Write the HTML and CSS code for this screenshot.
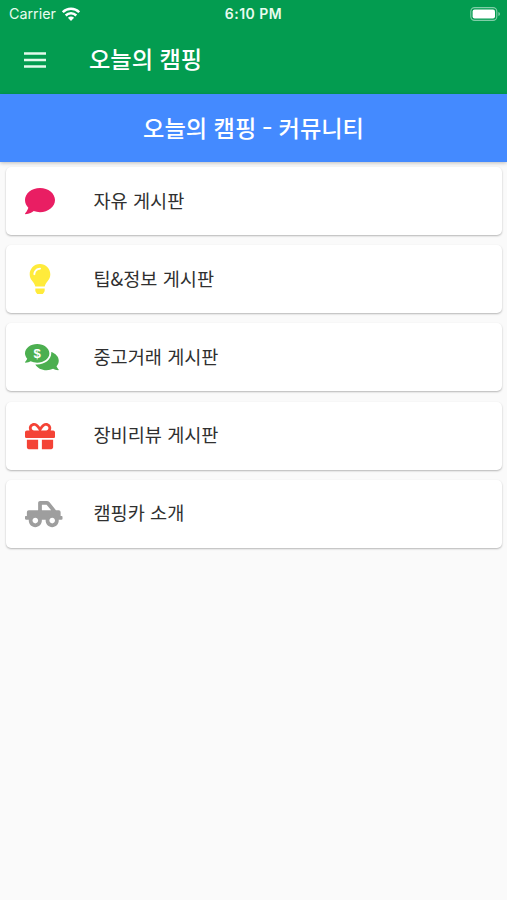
FILE: index.html
```html
<!DOCTYPE html>
<html lang="ko">
<head>
    <meta charset="UTF-8">
    <meta name="viewport" content="width=device-width, initial-scale=1.0">
    <title>오늘의 캠핑</title>
    <link rel="stylesheet" href="styles.css">
</head>
<body>
    <header class="app-bar">
        <div class="status-bar">
            <div class="carrier">
                <span>Carrier</span>
                <svg class="wifi" viewBox="0 0 18 14">
                    <path d="M.8 5.2a11.7 11.7 0 0 1 16.4 0M3.7 8.5a7.6 7.6 0 0 1 10.6 0" fill="none" stroke="currentColor" stroke-width="2.5"/>
                    <path d="M5.9 10.8a4.6 4.6 0 0 1 6.2 0L9 13.9z" fill="currentColor"/>
                </svg>
            </div>
            <div class="time">6:10 PM</div>
            <div class="battery">
                <svg viewBox="0 0 31 14">
                    <rect x=".8" y=".6" width="26" height="12.8" rx="3.8" fill="none" stroke="#fff" stroke-opacity=".5" stroke-width="1.1"/>
                    <rect x="2.6" y="2.4" width="22.4" height="9.2" rx="2" fill="#fff"/>
                    <path d="M28.4 5v4q1.6-.6 1.6-2t-1.6-2z" fill="#fff" fill-opacity=".5"/>
                </svg>
            </div>
        </div>
        <div class="toolbar">
            <svg class="menu" viewBox="0 0 24 16">
                <path d="M1 1.5h22M1 8h22M1 14.5h22" stroke="currentColor" stroke-width="2.4"/>
            </svg>
            <h1>오늘의 캠핑</h1>
        </div>
    </header>

    <h2 class="banner">오늘의 캠핑 <span class="dash">-</span> 커뮤니티</h2>

    <main class="board-list">
        <div class="card">
            <svg class="icon pink" viewBox="0 0 512 512">
                <path d="M256 32C114.6 32 0 125.1 0 240c0 49.6 21.4 95 57 130.7C44.5 421.1 2.7 466 2.2 466.5c-2.2 2.3-2.8 5.7-1.5 8.7S4.8 480 8 480c66.3 0 116-31.8 140.6-51.4 32.7 12.3 69 19.4 107.4 19.4 141.4 0 256-93.1 256-208S397.4 32 256 32z"/>
            </svg>
            <span>자유 게시판</span>
        </div>
        <div class="card">
            <svg class="icon yellow" viewBox="-80 0 512 512">
                <path d="M96.06 454.35c.01 6.29 1.87 12.45 5.36 17.69l17.09 25.69a31.99 31.99 0 0 0 26.64 14.28h61.71a31.99 31.99 0 0 0 26.64-14.28l17.09-25.69a31.989 31.989 0 0 0 5.36-17.69l.04-38.35H96.01l.05 38.35zM0 176c0 44.37 16.45 84.85 43.56 115.78 16.52 18.85 42.36 58.23 52.21 91.45.04.26.07.52.11.78h160.24c.04-.26.07-.51.11-.78 9.85-33.22 35.69-72.6 52.21-91.45C335.55 260.85 352 220.37 352 176 352 78.61 272.91-.3 175.45 0 73.44.31 0 82.97 0 176zm176-80c-44.11 0-80 35.89-80 80 0 8.84-7.16 16-16 16s-16-7.16-16-16c0-61.76 50.24-112 112-112 8.84 0 16 7.16 16 16s-7.16 16-16 16z"/>
            </svg>
            <span>팁&amp;정보 게시판</span>
        </div>
        <div class="card">
            <svg class="icon green" viewBox="0 0 512 512">
                <path d="M416 192c0-88.4-93.1-160-208-160S0 103.6 0 192c0 34.3 14.1 65.9 38 92-13.4 30.2-35.5 54.2-35.8 54.5-2.2 2.3-2.8 5.7-1.5 8.7S4.8 352 8 352c36.6 0 66.9-12.3 88.7-25 32.2 15.7 70.3 25 111.3 25 114.9 0 208-71.6 208-160zm122 220c23.9-26 38-57.7 38-92 0-66.9-53.5-124.2-129.3-148.1.9 6.6 1.3 13.3 1.3 20.1 0 105.9-107.7 192-240 192-10.8 0-21.3-.8-31.7-1.9C207.8 439.6 281.8 480 368 480c41 0 79.1-9.2 111.3-25 21.8 12.7 52.1 25 88.7 25 3.2 0 6.1-1.9 7.3-4.8 1.3-2.9.7-6.3-1.5-8.7-.3-.3-22.4-24.2-35.8-54.5z"/>
                <text class="dollar" x="208" y="267" text-anchor="middle">$</text>
            </svg>
            <span>중고거래 게시판</span>
        </div>
        <div class="card">
            <svg class="icon red" viewBox="0 0 512 512">
                <path d="M32 448c0 17.7 14.3 32 32 32h160V320H32v128zm256 32h160c17.7 0 32-14.3 32-32V320H288v160zm192-320h-42.1c6.2-12.1 10.1-25.5 10.1-40 0-48.5-39.5-88-88-88-41.6 0-68.5 21.3-103 68.3-34.5-47-61.4-68.3-103-68.3-48.5 0-88 39.5-88 88 0 14.5 3.8 27.9 10.1 40H32c-17.7 0-32 14.3-32 32v80c0 8.8 7.2 16 16 16h480c8.8 0 16-7.2 16-16v-80c0-17.7-14.3-32-32-32zm-326.1 0c-22.1 0-40-17.9-40-40s17.9-40 40-40c19.9 0 34.6 3.3 86.1 80h-86.1zm206.1 0h-86.1c51.4-76.5 65.7-80 86.1-80 22.1 0 40 17.9 40 40s-17.9 40-40 40z"/>
            </svg>
            <span>장비리뷰 게시판</span>
        </div>
        <div class="card">
            <svg class="icon grey" viewBox="0 0 512 512">
                <path d="M624 288h-16v-64c0-17.67-14.33-32-32-32h-48L419.22 56.02A64.025 64.025 0 0 0 369.24 32H256c-17.67 0-32 14.33-32 32v128H64c-17.67 0-32 14.33-32 32v64H16c-8.84 0-16 7.16-16 16v32c0 8.84 7.16 16 16 16h49.61c-.76 5.27-1.61 10.52-1.61 16 0 61.86 50.14 112 112 112s112-50.14 112-112c0-5.48-.85-10.73-1.61-16h67.23c-.76 5.27-1.61 10.52-1.61 16 0 61.86 50.14 112 112 112s112-50.14 112-112c0-5.48-.85-10.73-1.61-16H624c8.84 0 16-7.16 16-16v-32c0-8.84-7.16-16-16-16zM288 96h81.24l76.8 96H288V96zM176 416c-26.47 0-48-21.53-48-48s21.53-48 48-48 48 21.53 48 48-21.53 48-48 48zm288 0c-26.47 0-48-21.53-48-48s21.53-48 48-48 48 21.53 48 48-21.53 48-48 48z"/>
            </svg>
            <span>캠핑카 소개</span>
        </div>
    </main>
</body>
</html>
```

FILE: styles.css
```css
* {
    box-sizing: border-box;
}
body {
    margin: 0;
    min-height: 100vh;
    background: #fafafa;
    color: #303030;
    font-family: "Noto Sans CJK KR", sans-serif;
}
.app-bar {
    height: 94px;
    background: #039c50;
    color: #fff;
}
.status-bar {
    display: grid;
    grid-template-columns: 1fr auto 1fr;
    align-items: center;
    height: 27px;
    padding: 0 6px 0 9px;
    font-family: Inter, sans-serif;
    font-size: 14.3px;
    color: #e9fbef;
}
.carrier {
    display: flex;
    align-items: center;
    gap: 6px;
}
.wifi {
    width: 18px;
    height: 14px;
    color: #fff;
}
.time {
    margin-right: 3px;
    font-weight: 600;
    font-size: 14px;
    letter-spacing: 0.5px;
}
.battery {
    display: flex;
    justify-content: flex-end;
}
.battery svg {
    width: 31px;
    height: 14px;
}
.toolbar {
    display: flex;
    align-items: center;
    gap: 42px;
    height: 65px;
    padding-left: 23px;
}
.menu {
    width: 24px;
    height: 16px;
    color: #e4faeb;
}
h1, h2 {
    margin: 0;
    font-size: 23.2px;
    font-weight: 500;
}
h1 {
    padding-bottom: 4px;
}
.banner {
    display: flex;
    align-items: center;
    justify-content: center;
    gap: 7px;
    height: 68px;
    padding-bottom: 3px;
    background: #448aff;
    color: #fff;
    box-shadow: 0 1px 4px rgba(0, 0, 0, 0.25);
}
.dash {
    transform: scaleX(1.25);
}
.board-list {
    display: flex;
    flex-direction: column;
    gap: 10.2px;
    padding: 5px 5px 0 6px;
}
.card {
    display: flex;
    align-items: center;
    gap: 38.5px;
    height: 68px;
    padding-left: 19px;
    background: #fff;
    border-radius: 5px;
    box-shadow: 0 1px 2px rgba(0, 0, 0, 0.28);
    font-size: 18.6px;
}
.card span {
    padding-bottom: 4px;
}
.icon {
    width: 30px;
    height: 30px;
    overflow: visible;
    fill: currentColor;
}
.dollar {
    font: 700 225px "Liberation Sans", sans-serif;
    fill: #fff;
}
.pink {
    color: #e91e63;
}
.yellow {
    color: #ffeb3b;
}
.green {
    color: #4caf50;
}
.red {
    color: #f44336;
}
.grey {
    color: #9e9e9e;
}
```
